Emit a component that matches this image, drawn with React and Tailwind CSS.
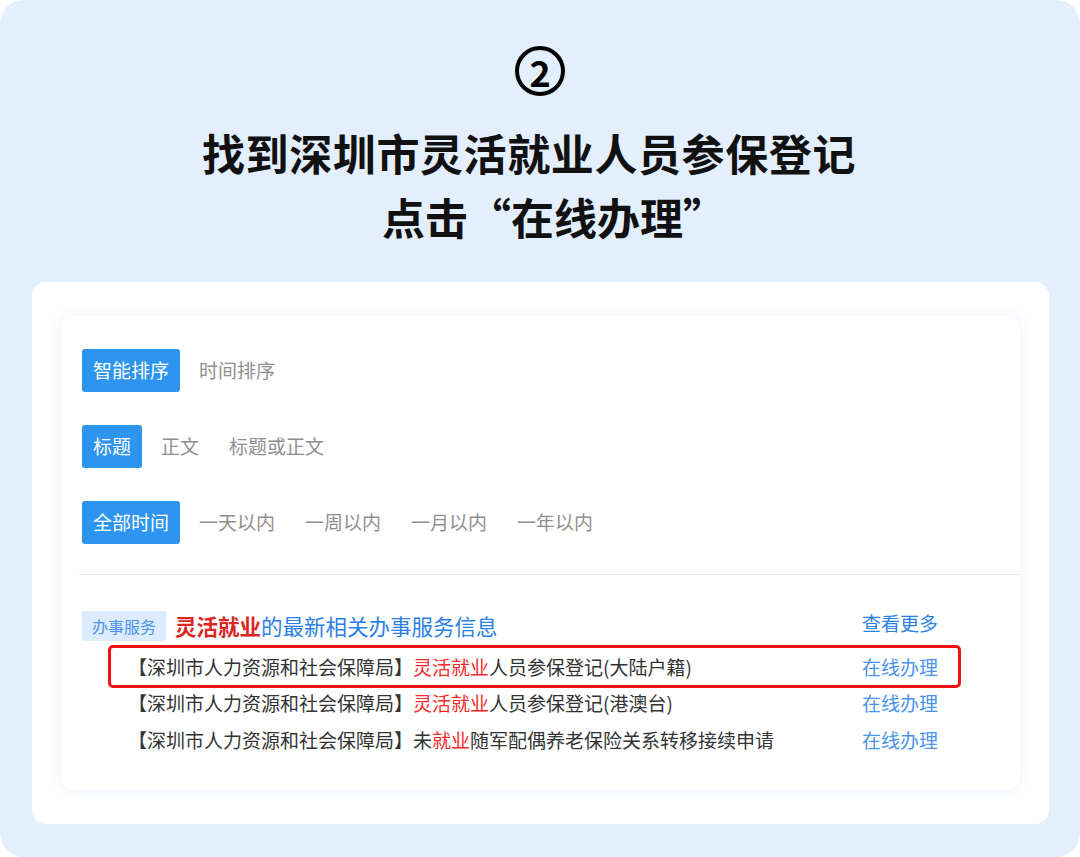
export default function App() {
  const tabRows = [
    [
      { label: '智能排序', active: true },
      { label: '时间排序' },
    ],
    [
      { label: '标题', active: true },
      { label: '正文' },
      { label: '标题或正文' },
    ],
    [
      { label: '全部时间', active: true },
      { label: '一天以内' },
      { label: '一周以内' },
      { label: '一月以内' },
      { label: '一年以内' },
    ],
  ];

  const rows = [
    { pre: '', hl: '灵活就业', post: '人员参保登记(大陆户籍)', boxed: true },
    { pre: '', hl: '灵活就业', post: '人员参保登记(港澳台)' },
    { pre: '未', hl: '就业', post: '随军配偶养老保险关系转移接续申请' },
  ];

  return (
    <div
      className="w-[1080px] h-[857px] rounded-[24px] bg-[#e3effd] overflow-hidden flex flex-col items-center"
      style={{ fontFamily: '"Noto Sans CJK SC", "Noto Sans", sans-serif' }}
    >
      {/* step number */}
      <div className="mt-[46px] w-[50px] h-[50px] rounded-full border-[4px] border-black flex items-center justify-center">
        <span className="text-[36px] font-bold leading-none text-black">2</span>
      </div>

      <div className="mt-[24px] text-center text-[43px] font-bold leading-[64px] text-[#111]">
        <div className="pr-[22px] tracking-[0.6px]">找到深圳市灵活就业人员参保登记</div>
        <div className="pl-[28px]">点击“在线办理”</div>
      </div>

      {/* white panel */}
      <div className="mt-[34px] w-[1017px] h-[542px] bg-white rounded-[14px] pt-[34px] pl-[29px] self-start ml-[32px]">
        <div className="w-[959px] h-[474px] rounded-[12px] bg-white shadow-[0_0_14px_rgba(70,120,210,0.13)] pt-[33px]">
          <div className="pl-[21px] flex flex-col gap-[33px]">
            {tabRows.map((row, i) => (
              <div key={i} className="flex gap-[8px]">
                {row.map((t) => (
                  <div
                    key={t.label}
                    className={`h-[43px] px-[11px] flex items-center text-[19px] rounded-[3px] ${
                      t.active ? 'bg-[#2d95ef] text-white' : 'text-[#8f8f8f]'
                    }`}
                  >
                    {t.label}
                  </div>
                ))}
              </div>
            ))}
          </div>

          <div className="mt-[30px] ml-[18px] h-px bg-[#e6e8eb]"></div>

          {/* service section */}
          <div className="mt-[36px] pl-[21px] pr-[82px] flex items-center h-[30px]">
            <div className="h-[30px] px-[10px] flex items-center bg-[#dcebfd] text-[#4a93ea] text-[16px] rounded-[2px]">
              办事服务
            </div>
            <div className="ml-[9px] flex-1 text-[21.5px] leading-none">
              <span className="text-[#d9261e] font-bold">灵活就业</span>
              <span className="text-[#2b7fe6]">的最新相关办事服务信息</span>
            </div>
            <div className="w-[76px] -mt-[8px] text-[19px] text-[#2b7fe6] leading-none">查看更多</div>
          </div>

          <div className="mt-[7px]">
            {rows.map((r, i) => (
              <div key={i} className="relative h-[36.5px] pl-[67px] pr-[82px] flex items-center">
                {r.boxed && (
                  <div className="absolute left-[47px] right-[59px] -top-[3px] -bottom-[3px] border-[3px] border-[#f21010] rounded-[5px]"></div>
                )}
                <div className="flex-1 text-[19px] text-[#333] leading-none">
                  【深圳市人力资源和社会保障局】{r.pre}
                  <span className="text-[#f52a2a]">{r.hl}</span>
                  {r.post}
                </div>
                <div className="w-[76px] text-[19px] text-[#4a93ea] leading-none">在线办理</div>
              </div>
            ))}
          </div>
        </div>
      </div>
    </div>
  );
}
